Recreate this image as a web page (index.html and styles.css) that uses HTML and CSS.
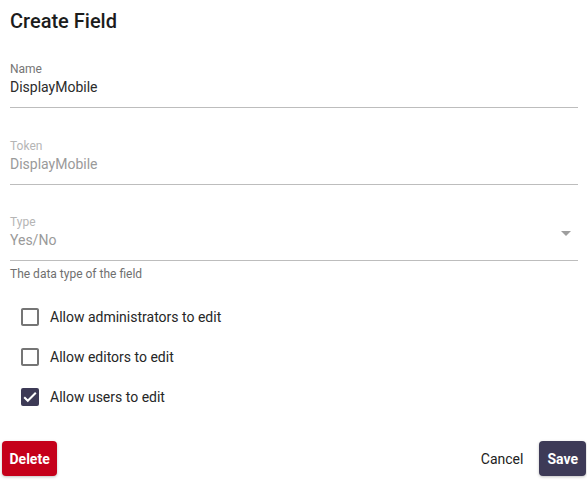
FILE: index.html
```html
<!DOCTYPE html>
<html lang="en">
<head>
<meta charset="utf-8">
<title>Create Field</title>
<link rel="stylesheet" href="styles.css">
</head>
<body>
<div class="dialog">
  <h2 class="title">Create Field</h2>
  <div class="fields">
    <div class="field">
      <div class="label">Name</div>
      <div class="value">DisplayMobile</div>
    </div>
    <div class="field disabled">
      <div class="label">Token</div>
      <div class="value">DisplayMobile</div>
    </div>
    <div class="field-group">
      <div class="field disabled select">
        <div class="label">Type</div>
        <div class="value">Yes/No</div>
        <svg class="arrow" viewBox="0 0 24 24" width="24" height="24"><path d="M7 10l5 5 5-5z"/></svg>
      </div>
      <div class="helper">The data type of the field</div>
    </div>
  </div>
  <div class="checks">
    <label class="check">
      <svg class="box" viewBox="0 0 24 24" width="24" height="24"><path d="M19 5v14H5V5h14m0-2H5c-1.11 0-2 .9-2 2v14c0 1.1.89 2 2 2h14c1.1 0 2-.9 2-2V5c0-1.1-.9-2-2-2z"/></svg>
      <span>Allow administrators to edit</span>
    </label>
    <label class="check">
      <svg class="box" viewBox="0 0 24 24" width="24" height="24"><path d="M19 5v14H5V5h14m0-2H5c-1.11 0-2 .9-2 2v14c0 1.1.89 2 2 2h14c1.1 0 2-.9 2-2V5c0-1.1-.9-2-2-2z"/></svg>
      <span>Allow editors to edit</span>
    </label>
    <label class="check">
      <svg class="box checked" viewBox="0 0 24 24" width="24" height="24"><rect x="3" y="3" width="18" height="18" rx="2" class="fill"/><path class="tick" d="M6.2 12.2l3.6 3.6 8-8" fill="none" stroke="#fff" stroke-width="2"/></svg>
      <span>Allow users to edit</span>
    </label>
  </div>
  <div class="actions">
    <button class="btn btn-danger">Delete</button>
    <div class="right">
      <button class="btn btn-text">Cancel</button>
      <button class="btn btn-primary">Save</button>
    </div>
  </div>
</div>
</body>
</html>
```

FILE: styles.css
```css
* { box-sizing: border-box; }
html, body { margin: 0; padding: 0; background: #fff; }
body {
  font-family: Roboto, "Liberation Sans", Arial, sans-serif;
  color: #212121;
  width: 587px;
  height: 480px;
  overflow: hidden;
}
.dialog {
  display: flex;
  flex-direction: column;
}
.title {
  margin: 9px 10px 0;
  font-size: 20px;
  line-height: 24px;
  font-weight: 500;
  color: #1c1c1c;
}
.fields {
  display: flex;
  flex-direction: column;
  gap: 31.5px;
  margin: 30px 9px 0 10px;
}
.field {
  position: relative;
  border-bottom: 1px solid #bdbdbd;
  padding-bottom: 10px;
}
.label {
  font-size: 12px;
  line-height: 13px;
  color: #757575;
}
.value {
  margin-top: 2px;
  font-size: 14px;
  line-height: 19px;
  color: #2b2b2b;
}
.disabled .label { color: #b5b5b5; }
.disabled .value { color: #9a9a9a; }
.arrow {
  position: absolute;
  right: 0;
  top: 5px;
  fill: #9e9e9e;
}
.helper {
  margin-top: 6px;
  font-size: 12px;
  line-height: 14px;
  color: #6f6f6f;
}
.checks {
  display: flex;
  flex-direction: column;
  margin: 16px 0 0 18px;
}
.check {
  display: flex;
  align-items: center;
  gap: 8px;
  height: 40px;
  font-size: 14px;
  color: #262626;
}
.box { fill: #757575; flex: none; }
.box.checked .fill { fill: #3d3a56; }
.actions {
  display: flex;
  justify-content: space-between;
  align-items: center;
  margin: 24px 1px 0 2px;
}
.right { display: flex; gap: 8px; }
.btn {
  font-family: Roboto, "Liberation Sans", Arial, sans-serif;
  font-size: 14px;
  height: 35px;
  padding: 0 8px;
  border: none;
  border-radius: 4px;
  cursor: pointer;
}
.btn-danger {
  background: #c5001a;
  color: #fff;
  font-weight: 700;
  padding: 0 7.5px;
  box-shadow: 0 1px 3px rgba(0,0,0,0.25);
}
.btn-primary {
  background: #3d3a57;
  color: #fff;
  font-weight: 700;
  padding: 0 8px;
  box-shadow: 0 1px 3px rgba(0,0,0,0.25);
}
.btn-text {
  background: transparent;
  color: #212121;
  font-weight: 400;
}
```
